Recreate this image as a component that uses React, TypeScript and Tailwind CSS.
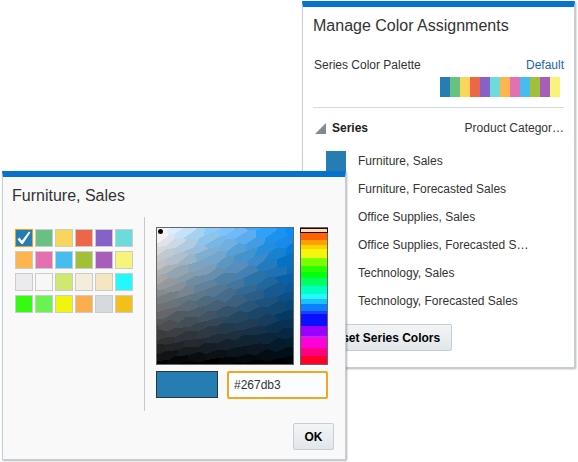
import { useState } from "react";

interface SeriesRow {
  name: string;
  swatch: string;
}

const palette = [
  "#267db3",
  "#68c182",
  "#fad55c",
  "#ed6647",
  "#8561c8",
  "#6ddbdb",
  "#ffb54d",
  "#e371b2",
  "#47bdef",
  "#a2bf39",
  "#a75dba",
  "#f7f37b",
];

const swatches = [
  ...palette,
  "#ebebed",
  "#f7f7f7",
  "#d0e86f",
  "#f5eddc",
  "#f5e6c0",
  "#23f8fc",
  "#35fb12",
  "#68f350",
  "#f1f50c",
  "#fcae4e",
  "#d6dadc",
  "#f1c01d",
];

const series: SeriesRow[] = [
  { name: "Furniture, Sales", swatch: "#267db3" },
  { name: "Furniture, Forecasted Sales", swatch: "#68c182" },
  { name: "Office Supplies, Sales", swatch: "#fad55c" },
  { name: "Office Supplies, Forecasted S…", swatch: "#ed6647" },
  { name: "Technology, Sales", swatch: "#8561c8" },
  { name: "Technology, Forecasted Sales", swatch: "#6ddbdb" },
];

// start, height, colour
const hueBands: [number, number, string][] = [
  [0, 5, "#ff3000"],
  [5, 7, "#ff6200"],
  [12, 5, "#ff9f00"],
  [17, 4, "#ffd000"],
  [21, 9, "#f2f50c"],
  [30, 8, "#78ff00"],
  [38, 6, "#2aff00"],
  [44, 6, "#00ff10"],
  [50, 8, "#00ff60"],
  [58, 8, "#00ffc4"],
  [66, 5, "#23f8fc"],
  [71, 5, "#1cc0ff"],
  [76, 7, "#0c80ff"],
  [83, 3, "#1c40ff"],
  [86, 12, "#0a10ff"],
  [98, 10, "#9a00ff"],
  [108, 2, "#c822f0"],
  [110, 10, "#ff00d8"],
  [120, 8, "#ff0080"],
  [128, 8, "#ff0028"],
];

const SIZE = 136;

const noise = (a: number, b: number) => {
  const n = Math.sin(a * 127.1 + b * 311.7) * 43758.5453;
  return n - Math.floor(n);
};

const vertex = (i: number, j: number): [number, number] => {
  const x = i * 10 - 20 + (noise(i, j) - 0.5) * 6;
  const base = j * 7 + ((i + j) % 2 ? -1 : 1) + (noise(j, i) - 0.5) * 3;
  const slope = Math.max(0.12, 0.5 - base / 400);
  return [x, base - slope * x];
};

const shade = (x: number, y: number, n: number) => {
  const u = Math.min(1, Math.max(0, x / SIZE));
  const v = Math.pow(1 - Math.min(1, Math.max(0, y / SIZE)), 0.9);
  const mix = (full: number, k: number) =>
    Math.round(Math.min(255, Math.max(0, (255 - (255 - full) * u) * v + (n - 0.5) * k * v)));
  return `rgb(${mix(8, 26)}, ${mix(145, 6)}, ${mix(255, 8)})`;
};

const facets: { points: string; fill: string }[] = [];
for (let r = -2; r < 30; r++) {
  for (let c = 0; c < 9; c++) {
    const s = 2 * c + Math.abs(r % 2);
    const pts = [
      vertex(s, r),
      vertex(s + 1, r),
      vertex(s + 2, r),
      vertex(s + 2, r + 1),
      vertex(s + 1, r + 1),
      vertex(s, r + 1),
    ];
    const cx = pts.reduce((t, p) => t + p[0], 0) / 6;
    const cy = pts.reduce((t, p) => t + p[1], 0) / 6;
    facets.push({
      points: pts.map((p) => `${p[0].toFixed(1)},${p[1].toFixed(1)}`).join(" "),
      fill: shade(cx, cy, noise(r + 3, c + 7)),
    });
  }
}

const ColorField = () => (
  <svg
    width="138"
    height="138"
    viewBox="-1 -1 138 138"
    className="block shrink-0"
    shapeRendering="crispEdges"
    role="img"
    aria-label="Saturation and brightness"
  >
    <rect x="0" y="0" width="136" height="136" fill="#000" />
    {facets.map((f, i) => (
      <polygon key={i} points={f.points} fill={f.fill} stroke={f.fill} strokeWidth="1" />
    ))}
    <rect x="-0.5" y="-0.5" width="137" height="137" fill="none" stroke="#666" />
    <circle cx="3.5" cy="3.5" r="2.5" fill="#000" shapeRendering="auto" />
  </svg>
);

const HueStrip = () => (
  <svg
    width="28"
    height="138"
    viewBox="0 -1 28 138"
    className="block shrink-0"
    shapeRendering="crispEdges"
    role="img"
    aria-label="Hue"
  >
    {hueBands.map(([y, h, fill]) => (
      <rect key={y} x="1" y={y} width="26" height={h} fill={fill} />
    ))}
    <rect x="0.5" y="-0.5" width="27" height="137" fill="none" stroke="#666" />
    <rect x="0.5" y="0.5" width="27" height="4" fill="#f8dcc0" stroke="#2a0808" />
  </svg>
);

const ManagePanel = () => (
  <section className="ml-auto mr-[3px] w-[273px] border border-t-[6px] border-[#c4ced7] border-t-[#0572ce] bg-white px-[10px] pb-4 shadow-[1px_1px_2px_rgba(0,0,0,0.3)]">
    <h1 className="pt-[9px] text-[16px] leading-5">Manage Color Assignments</h1>

    <div className="mt-[21px] flex justify-between pl-px leading-4">
      <span>Series Color Palette</span>
      <a href="#palette" className="text-[#1a66ae]">
        Default
      </a>
    </div>
    <div className="mr-1 mt-1 flex justify-end">
      {palette.map((c) => (
        <span key={c} className="h-5 w-[10px]" style={{ backgroundColor: c }} />
      ))}
    </div>

    <hr className="mt-[10px] border-[#d3dbe2]" />

    <div className="mt-3 flex items-center pl-[2px] leading-4">
      <svg width="11" height="11" viewBox="0 0 11 11" className="mr-[6px]" aria-hidden="true">
        <path d="M11 0v11H0z" fill="#848a90" />
      </svg>
      <h2 className="font-bold text-[#222]">Series</h2>
      <span className="ml-auto">Product Categor…</span>
    </div>

    <ul className="mt-[11px]">
      {series.map((s) => (
        <li key={s.name} className="flex h-7 items-center pl-[13px]">
          <span className="h-5 w-5" style={{ backgroundColor: s.swatch }} />
          <span className="ml-3 whitespace-nowrap">{s.name}</span>
        </li>
      ))}
    </ul>

    <button
      type="button"
      className="ml-[2px] mt-[9px] block h-[27px] w-[137px] rounded-[2px] border border-[#c4ced7] bg-linear-to-b from-[#f3f5f6] to-[#e2e6ea] text-center font-bold text-black"
    >
      Reset Series Colors
    </button>
  </section>
);

const ColorDialog = () => {
  const [selected, setSelected] = useState(0);
  const [hex, setHex] = useState("#267db3");

  const pick = (i: number) => {
    setSelected(i);
    setHex(swatches[i]);
  };

  return (
    <section
      role="dialog"
      aria-label="Furniture, Sales"
      className="absolute left-[2px] top-[171px] w-[344px] border border-t-[6px] border-[#c4ced7] border-t-[#0572ce] bg-[#f9f9f9] pb-[9px] shadow-[1px_1px_2px_rgba(0,0,0,0.3)]"
    >
      <h2 className="pl-[9px] pt-[9px] text-[16px] leading-5">Furniture, Sales</h2>

      <div className="mt-[11px] flex">
        <div className="border-r border-[#c8c8c8] pb-[98px] pl-3 pr-[11px] pt-3">
          <div className="grid grid-cols-6 gap-x-[2px] gap-y-1">
            {swatches.map((c, i) => (
              <button
                key={c}
                type="button"
                aria-label={c}
                onClick={() => pick(i)}
                className={
                  i === selected
                    ? "h-[18px] w-[18px] border border-[#f5a30a]"
                    : "h-[18px] w-[18px] border border-[#ccc]"
                }
                style={{ backgroundColor: c }}
              >
                {i === selected && (
                  <svg width="16" height="16" viewBox="0 0 16 16" aria-hidden="true">
                    <path d="M1.5 9.2l2-1.6 2.4 3.2L13 1.5l1.4 1L6.8 14H5.4z" fill="#fff" />
                  </svg>
                )}
              </button>
            ))}
          </div>
        </div>

        <div className="ml-[11px] pt-[10px]">
          <div className="flex gap-[6px]">
            <ColorField />
            <HueStrip />
          </div>
          <div className="mt-[6px] flex justify-between">
            <span className="h-[27px] w-[62px] border border-[#333]" style={{ backgroundColor: hex }} />
            <input
              type="text"
              aria-label="Hex color"
              value={hex}
              onChange={(e) => setHex(e.target.value)}
              className="h-7 w-[101px] rounded-[2px] border-2 border-[#f0a823] bg-[#fcfdfe] px-[5px] outline-none"
            />
          </div>
        </div>
      </div>

      <div className="mt-3 flex justify-end pr-[11px]">
        <button
          type="button"
          className="h-[27px] w-[41px] rounded-[2px] border border-[#c4ced7] bg-linear-to-b from-[#f3f5f6] to-[#e2e6ea] font-bold text-black"
        >
          OK
        </button>
      </div>
    </section>
  );
};

export default function App() {
  return (
    <main className="relative min-h-screen bg-white pt-px font-['Liberation_Sans',Arial,sans-serif] text-[12px] text-[#333]">
      <ManagePanel />
      <ColorDialog />
    </main>
  );
}
